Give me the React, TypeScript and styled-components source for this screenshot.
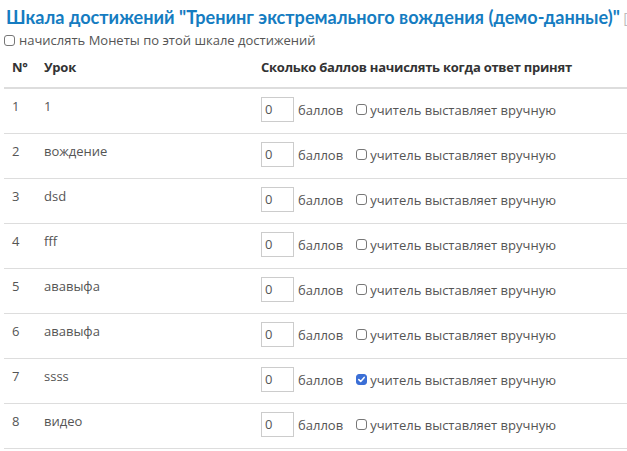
import React from "react";
import styled, { createGlobalStyle } from "styled-components";

const Global = createGlobalStyle`
  html, body { margin: 0; padding: 0; background: #fff; }
  body { overflow: hidden; font-family: "Open Sans", "Liberation Sans", sans-serif; }
`;

const Page = styled.div`
  width: 627px;
  height: 451px;
  overflow: hidden;
  padding: 0 0 0 4px;
  box-sizing: border-box;
`;

const Title = styled.h1`
  margin: 0;
  padding: 6px 0 0 2px;
  font-family: Lato, "Open Sans", sans-serif;
  font-size: 18.1px;
  line-height: 23px;
  font-weight: 700;
  color: #157cc1;
  white-space: nowrap;
`;

const TitleAside = styled.span`
  color: #bbb;
  font-weight: 400;
  font-size: 14px;
  margin-left: -1px;
`;

const CoinRow = styled.label`
  display: flex;
  align-items: center;
  gap: 4px;
  font-size: 13px;
  color: #555;
  height: 20px;
`;

const Box = styled.span<{ $checked?: boolean }>`
  width: 11px;
  height: 11px;
  border-radius: 3px;
  box-sizing: border-box;
  border: 1px solid ${(p) => (p.$checked ? "#3b6fd6" : "#777")};
  background: ${(p) => (p.$checked ? "#3b6fd6" : "#fff")};
  display: inline-flex;
  align-items: center;
  justify-content: center;
  flex: none;
`;

const Table = styled.table`
  border-collapse: collapse;
  table-layout: fixed;
  width: 640px;
  font-size: 13px;
  color: #555;
`;

const Col = styled.col<{ $w?: number }>`
  width: ${(p) => (p.$w ? `${p.$w}px` : "auto")};
`;

const Th = styled.th`
  text-align: left;
  font-weight: 700;
  color: #333;
  letter-spacing: -0.25px;
  padding: 8px 8px 11px;
  line-height: 18px;
  border-bottom: 2px solid #ddd;
  white-space: nowrap;
`;

const Tr = styled.tr`
  border-bottom: 1px solid #ddd;
`;

const Td = styled.td`
  vertical-align: top;
  padding: 8px 8px 11px;
  line-height: 18px;
  height: 25px;
  white-space: nowrap;
`;

const Points = styled.div`
  display: flex;
  align-items: center;
  height: 25px;
`;

const Input = styled.div`
  width: 33px;
  height: 25px;
  box-sizing: border-box;
  border: 1px solid #ccc;
  padding: 0 3px;
  line-height: 23px;
  color: #555;
  margin-right: 4px;
`;

const Unit = styled.span`
  margin-right: 13px;
`;

const Manual = styled.label`
  display: flex;
  align-items: center;
  gap: 3px;
`;

const Check = ({ checked }: { checked?: boolean }) => (
  <Box $checked={checked}>
    {checked && (
      <svg width="9" height="9" viewBox="0 0 9 9">
        <path d="M1.8 4.6 L3.7 6.4 L7.2 2.4" stroke="#fff" strokeWidth="1.5" fill="none" strokeLinecap="round" strokeLinejoin="round" />
      </svg>
    )}
  </Box>
);

const rows = [
  { n: 1, name: "1" },
  { n: 2, name: "вождение" },
  { n: 3, name: "dsd" },
  { n: 4, name: "fff" },
  { n: 5, name: "ававыфа" },
  { n: 6, name: "ававыфа" },
  { n: 7, name: "ssss", checked: true },
  { n: 8, name: "видео" },
];

export default function App() {
  return (
    <>
      <Global />
      <Page>
        <Title>
          Шкала достижений "Тренинг экстремального вождения (демо-данные)" <TitleAside>[изменить]</TitleAside>
        </Title>
        <CoinRow>
          <Check />
          начислять Монеты по этой шкале достижений
        </CoinRow>
        <Table>
          <colgroup>
            <Col $w={32} />
            <Col $w={217} />
            <Col />
          </colgroup>
          <thead>
            <tr>
              <Th>N°</Th>
              <Th>Урок</Th>
              <Th>Сколько баллов начислять когда ответ принят</Th>
            </tr>
          </thead>
          <tbody>
            {rows.map((r) => (
              <Tr key={r.n}>
                <Td>{r.n}</Td>
                <Td>{r.name}</Td>
                <Td>
                  <Points>
                    <Input>0</Input>
                    <Unit>баллов</Unit>
                    <Manual>
                      <Check checked={r.checked} />
                      учитель выставляет вручную
                    </Manual>
                  </Points>
                </Td>
              </Tr>
            ))}
          </tbody>
        </Table>
      </Page>
    </>
  );
}
